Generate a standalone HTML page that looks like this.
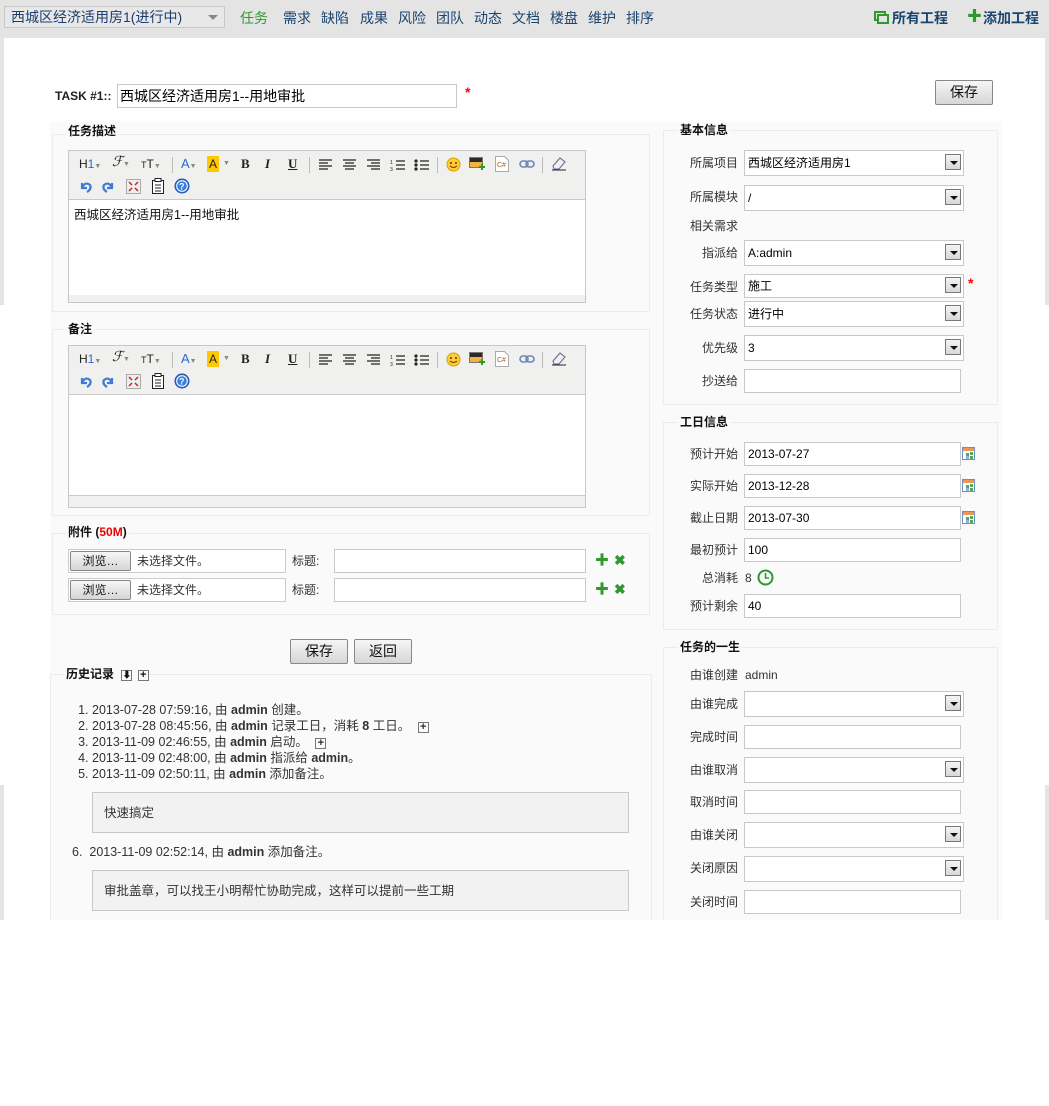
<!DOCTYPE html>
<html><head><meta charset="utf-8">
<style>
*{box-sizing:border-box;margin:0;padding:0}
body{width:1049px;height:1106px;background:#fff;font-family:"Liberation Sans","Noto Sans CJK SC",sans-serif;font-size:12px;line-height:15px;color:#333;position:relative;overflow:hidden}
.a{position:absolute}
.top{left:0;top:0;width:1049px;height:38px;background:#e4e4e4}
.nav{top:9px;font-size:14px;line-height:18px;color:#1b4470}
.fs{position:absolute;border:1px solid #ececec;background:#fafafa}
.lg{position:absolute;font-weight:bold;font-size:12px;color:#111;background:#fafafa;padding:0 2px;line-height:14px}
.inp{position:absolute;border:1px solid #c8c8c8;background:#fff;height:24px;font-size:12px;line-height:22px;padding-left:3px;color:#000}
.sel .arr{position:absolute;right:2px;top:3px;width:16px;height:16px;border:1px solid #777;background:linear-gradient(#f4f4f4,#d8d8d8)}
.sel .arr:after{content:"";position:absolute;left:4px;top:6px;border-left:4px solid transparent;border-right:4px solid transparent;border-top:4px solid #111}
.lab{position:absolute;width:70px;text-align:right;color:#333;font-size:12px}
.btn{position:absolute;height:25px;border:1px solid #888;border-radius:2px;background:linear-gradient(#f6f6f6,#d6d6d6);font-size:14px;text-align:center;line-height:23px;color:#111}
.ed{position:absolute;border:1px solid #c8c8c8;background:#fff}
.tb{position:absolute;left:0;top:0;right:0;height:49px;background:#f0f0ee;border-bottom:1px solid #c8c8c8}
.ti{position:absolute;font-size:12px;line-height:14px;color:#222}
.sep{position:absolute;top:6px;width:1px;height:16px;background:#bbb}
.bb{position:absolute;left:0;right:0;bottom:0;height:7px;background:#f0f0ee}
.hl li{margin-left:22px;line-height:16px;font-size:12.5px;color:#333}
.note{position:absolute;left:92px;width:537px;height:41px;border:1px solid #c8c8c8;background:#f2f2f2;padding:12px 0 0 11px;font-size:12.5px;line-height:16px}
.cal{position:absolute;width:13px;height:13px;border:1px solid #6a8fc7;background:#fff}
.cal:before{content:"";position:absolute;left:0;top:0;right:0;height:3px;background:#f0955a}
.cal:after{content:"";position:absolute;left:3px;top:5px;width:3px;height:3px;background:#5a5;box-shadow:4px -1px 0 #5a5,0 3px 0 #9ad,4px 3px 0 #5a5}
</style></head><body>
<div class="a top"></div>
<div class="a" style="left:4px;top:6px;width:221px;height:22px;border:1px solid #c8c8c8;background:#e8e8e8;font-size:14px;color:#1b3e6e;line-height:20px;padding-left:6px">西城区经济适用房1(进行中)<span class="a" style="right:6px;top:8px;border-left:5px solid transparent;border-right:5px solid transparent;border-top:5px solid #888"></span></div>
<span class="a nav" style="left:240px;color:#2e9a2e">任务</span>
<span class="a nav" style="left:283px">需求</span>
<span class="a nav" style="left:321px">缺陷</span>
<span class="a nav" style="left:360px">成果</span>
<span class="a nav" style="left:398px">风险</span>
<span class="a nav" style="left:436px">团队</span>
<span class="a nav" style="left:474px">动态</span>
<span class="a nav" style="left:512px">文档</span>
<span class="a nav" style="left:550px">楼盘</span>
<span class="a nav" style="left:588px">维护</span>
<span class="a nav" style="left:626px">排序</span>
<svg class="a" style="left:874px;top:11px" width="15" height="13"><rect x="1" y="1" width="10" height="8" fill="none" stroke="#2e9a2e" stroke-width="2"/><rect x="4" y="4" width="10" height="8" fill="#e4e4e4" stroke="#2e9a2e" stroke-width="2"/></svg>
<span class="a nav" style="left:892px;font-weight:bold">所有工程</span>
<span class="a nav" style="left:967px;color:#2e9a2e;font-weight:bold;font-size:15px;top:8px">✚</span>
<span class="a nav" style="left:983px;font-weight:bold">添加工程</span>

<div class="a" style="left:0;top:38px;width:4px;height:267px;background:#e4e4e4"></div>
<div class="a" style="left:1045px;top:38px;width:4px;height:267px;background:#e4e4e4"></div>
<div class="a" style="left:0;top:785px;width:4px;height:135px;background:#e4e4e4"></div>
<div class="a" style="left:1045px;top:785px;width:4px;height:135px;background:#e4e4e4"></div>

<span class="a" style="left:55px;top:89px;font-weight:bold;color:#222">TASK #1::</span>
<div class="inp" style="left:117px;top:84px;width:340px;height:24px;font-size:14px;line-height:22px;padding-left:2px">西城区经济适用房1--用地审批</div>
<span class="a" style="left:465px;top:85px;color:#f00;font-weight:bold;font-size:14px">*</span>
<div class="btn" style="left:935px;top:80px;width:58px">保存</div>

<div class="a" style="left:50px;top:122px;width:610px;height:798px;background:#fafafa"></div>
<div class="a" style="left:660px;top:122px;width:342px;height:798px;background:#fafafa"></div>

<div class="fs" style="left:52px;top:134px;width:598px;height:178px"></div>
<div class="lg" style="left:66px;top:124px">任务描述</div>
<div class="ed" style="left:68px;top:150px;width:518px;height:153px">
 <div class="tb" id="tb1"></div>
 <div class="a" style="left:5px;top:57px;font-size:12.5px;color:#111">西城区经济适用房1--用地审批</div>
 <div class="bb"></div>
</div>
<div class="fs" style="left:52px;top:329px;width:598px;height:187px"></div>
<div class="lg" style="left:66px;top:322px">备注</div>
<div class="ed" style="left:68px;top:345px;width:518px;height:163px">
 <div class="tb" id="tb2"></div>
 <div class="bb" style="height:12px;border-top:1px solid #c8c8c8"></div>
</div>
<div class="fs" style="left:52px;top:533px;width:598px;height:82px"></div>
<div class="lg" style="left:66px;top:525px">附件 (<span style="color:#e00">50M</span>)</div>
<div class="a" style="left:68px;top:549px;width:218px;height:24px;border:1px solid #ccc;background:#fff"></div>
<div class="btn" style="left:70px;top:551px;width:61px;height:20px;font-size:12px;line-height:18px">浏览…</div>
<span class="a" style="left:137px;top:554px">未选择文件。</span>
<span class="a" style="left:292px;top:554px">标题:</span>
<div class="inp" style="left:334px;top:549px;width:252px"></div>
<span class="a" style="left:595px;top:553px;color:#2e9a2e;font-weight:bold;font-size:14px">✚</span>
<span class="a" style="left:614px;top:553px;color:#2e9a2e;font-weight:bold;font-size:14px">✖</span>
<div class="a" style="left:68px;top:578px;width:218px;height:24px;border:1px solid #ccc;background:#fff"></div>
<div class="btn" style="left:70px;top:580px;width:61px;height:20px;font-size:12px;line-height:18px">浏览…</div>
<span class="a" style="left:137px;top:583px">未选择文件。</span>
<span class="a" style="left:292px;top:583px">标题:</span>
<div class="inp" style="left:334px;top:578px;width:252px"></div>
<span class="a" style="left:595px;top:582px;color:#2e9a2e;font-weight:bold;font-size:14px">✚</span>
<span class="a" style="left:614px;top:582px;color:#2e9a2e;font-weight:bold;font-size:14px">✖</span>

<div class="btn" style="left:290px;top:639px;width:58px">保存</div>
<div class="btn" style="left:354px;top:639px;width:58px">返回</div>

<div class="fs" style="left:50px;top:674px;width:602px;height:260px"></div>
<div class="lg" style="left:64px;top:667px">历史记录 <span style="display:inline-block;width:11px;height:11px;border:1px solid #777;font-size:9px;line-height:9px;text-align:center;margin-left:4px">⬇</span> <span style="display:inline-block;width:11px;height:11px;border:1px solid #777;font-size:11px;line-height:9px;text-align:center;margin-left:2px">+</span></div>
<ol class="a hl" style="left:70px;top:702px">
<li>2013-07-28 07:59:16, 由 <b>admin</b> 创建。</li>
<li>2013-07-28 08:45:56, 由 <b>admin</b> 记录工日，消耗 <b>8</b> 工日。 <span style="display:inline-block;width:11px;height:11px;border:1px solid #777;font-size:11px;line-height:9px;text-align:center;margin-left:4px;font-weight:bold">+</span></li>
<li>2013-11-09 02:46:55, 由 <b>admin</b> 启动。 <span style="display:inline-block;width:11px;height:11px;border:1px solid #777;font-size:11px;line-height:9px;text-align:center;margin-left:4px;font-weight:bold">+</span></li>
<li>2013-11-09 02:48:00, 由 <b>admin</b> 指派给 <b>admin</b>。</li>
<li>2013-11-09 02:50:11, 由 <b>admin</b> 添加备注。</li>
</ol>
<div class="note" style="top:792px">快速搞定</div>
<span class="a" style="left:72px;top:844px;font-size:12.5px;line-height:16px">6.&nbsp; 2013-11-09 02:52:14, 由 <b>admin</b> 添加备注。</span>
<div class="note" style="top:870px">审批盖章，可以找王小明帮忙协助完成，这样可以提前一些工期</div>

<div class="fs" style="left:663px;top:130px;width:335px;height:275px"></div>
<div class="lg" style="left:678px;top:123px">基本信息</div>
<div class="lab" style="left:668px;top:156px">所属项目</div><div class="inp sel" style="left:744px;top:150px;width:220px;height:26px;line-height:24px">西城区经济适用房1<span class="arr"></span></div>
<div class="lab" style="left:668px;top:190px">所属模块</div><div class="inp sel" style="left:744px;top:185px;width:220px;height:26px;line-height:24px">/<span class="arr"></span></div>
<div class="lab" style="left:668px;top:219px">相关需求</div>
<div class="lab" style="left:668px;top:246px">指派给</div><div class="inp sel" style="left:744px;top:240px;width:220px;height:26px;line-height:24px">A:admin<span class="arr"></span></div>
<div class="lab" style="left:668px;top:280px">任务类型</div><div class="inp sel" style="left:744px;top:274px;width:220px;height:24px">施工<span class="arr" style="top:2px"></span></div>
<span class="a" style="left:968px;top:276px;color:#f00;font-weight:bold;font-size:14px">*</span>
<div class="lab" style="left:668px;top:307px">任务状态</div><div class="inp sel" style="left:744px;top:301px;width:220px;height:26px;line-height:24px">进行中<span class="arr"></span></div>
<div class="lab" style="left:668px;top:341px">优先级</div><div class="inp sel" style="left:744px;top:335px;width:220px;height:26px;line-height:24px">3<span class="arr"></span></div>
<div class="lab" style="left:668px;top:374px">抄送给</div><div class="inp" style="left:744px;top:369px;width:217px"></div>

<div class="fs" style="left:663px;top:422px;width:335px;height:208px"></div>
<div class="lg" style="left:678px;top:415px">工日信息</div>
<div class="lab" style="left:668px;top:447px">预计开始</div><div class="inp" style="left:744px;top:442px;width:217px">2013-07-27</div><div class="cal" style="left:962px;top:447px"></div>
<div class="lab" style="left:668px;top:479px">实际开始</div><div class="inp" style="left:744px;top:474px;width:217px">2013-12-28</div><div class="cal" style="left:962px;top:479px"></div>
<div class="lab" style="left:668px;top:511px">截止日期</div><div class="inp" style="left:744px;top:506px;width:217px">2013-07-30</div><div class="cal" style="left:962px;top:511px"></div>
<div class="lab" style="left:668px;top:543px">最初预计</div><div class="inp" style="left:744px;top:538px;width:217px">100</div>
<div class="lab" style="left:668px;top:571px">总消耗</div><span class="a" style="left:745px;top:571px">8</span>
<svg class="a" style="left:757px;top:569px" width="17" height="17"><circle cx="8.5" cy="8.5" r="7" fill="none" stroke="#2e9a2e" stroke-width="2"/><path d="M8.5 4v5h3.5" fill="none" stroke="#2e9a2e" stroke-width="1.6"/></svg>
<div class="lab" style="left:668px;top:599px">预计剩余</div><div class="inp" style="left:744px;top:594px;width:217px">40</div>

<div class="fs" style="left:663px;top:647px;width:335px;height:290px"></div>
<div class="lg" style="left:678px;top:640px">任务的一生</div>
<div class="lab" style="left:668px;top:668px">由谁创建</div><span class="a" style="left:745px;top:668px">admin</span>
<div class="lab" style="left:668px;top:697px">由谁完成</div><div class="inp sel" style="left:744px;top:691px;width:220px;height:26px"><span class="arr"></span></div>
<div class="lab" style="left:668px;top:730px">完成时间</div><div class="inp" style="left:744px;top:725px;width:217px"></div>
<div class="lab" style="left:668px;top:763px">由谁取消</div><div class="inp sel" style="left:744px;top:757px;width:220px;height:26px"><span class="arr"></span></div>
<div class="lab" style="left:668px;top:795px">取消时间</div><div class="inp" style="left:744px;top:790px;width:217px"></div>
<div class="lab" style="left:668px;top:828px">由谁关闭</div><div class="inp sel" style="left:744px;top:822px;width:220px;height:26px"><span class="arr"></span></div>
<div class="lab" style="left:668px;top:861px">关闭原因</div><div class="inp sel" style="left:744px;top:856px;width:220px;height:26px"><span class="arr"></span></div>
<div class="lab" style="left:668px;top:895px">关闭时间</div><div class="inp" style="left:744px;top:890px;width:217px"></div>

<div class="a" style="left:0;top:920px;width:1049px;height:186px;background:#fff"></div>

<template id="tbt">
<span class="ti" style="left:10px;top:6px">H<span style="color:#2a6ad0">1</span><span style="font-size:7px;color:#888">▼</span></span>
<span class="ti" style="left:43px;top:5px;font-style:italic;font-family:'Liberation Serif',serif;font-size:14px">ℱ<span style="font-size:7px;color:#888">▼</span></span>
<span class="ti" style="left:72px;top:6px"><span style="font-size:9px">T</span>T<span style="font-size:7px;color:#888">▼</span></span>
<span class="sep" style="left:103px"></span>
<span class="ti" style="left:112px;top:6px;color:#2a6ad0;font-size:13px">A<span style="font-size:7px;color:#888">▼</span></span>
<span class="ti" style="left:138px;top:5px;background:#ffc800;padding:1px 2px;font-size:12px">A</span><span class="ti" style="left:154px;top:6px;font-size:7px;color:#888">▼</span>
<span class="ti" style="left:172px;top:6px;font-weight:bold;font-family:'Liberation Serif',serif;font-size:13px">B</span>
<span class="ti" style="left:196px;top:6px;font-weight:bold;font-style:italic;font-family:'Liberation Serif',serif;font-size:13px">I</span>
<span class="ti" style="left:219px;top:6px;font-weight:bold;text-decoration:underline;font-family:'Liberation Serif',serif;font-size:13px">U</span>
<span class="sep" style="left:240px"></span>
<svg class="a" style="left:250px;top:8px" width="110" height="12" stroke="#222" stroke-width="1.2"><path d="M0 1h13M0 4h9M0 7h13M0 10h9"/><path d="M24 1h13M26 4h9M24 7h13M26 10h9"/><path d="M48 1h13M52 4h9M48 7h13M52 10h9"/><path d="M77 2h9M77 6h9M77 10h9" /><text x="71" y="5" font-size="5" stroke="none" fill="#222">1</text><text x="71" y="12" font-size="5" stroke="none" fill="#222">3</text><path d="M101 2h9M101 6h9M101 10h9"/><circle cx="97" cy="2" r="1" fill="#222"/><circle cx="97" cy="6" r="1" fill="#222"/><circle cx="97" cy="10" r="1" fill="#222"/></svg>
<span class="sep" style="left:368px"></span>
<svg class="a" style="left:377px;top:6px" width="15" height="15"><circle cx="7.5" cy="7.5" r="6.5" fill="#fc3" stroke="#d9a000"/><circle cx="5" cy="6" r="1" fill="#630"/><circle cx="10" cy="6" r="1" fill="#630"/><path d="M4 9q3.5 3 7 0" fill="none" stroke="#630"/></svg>
<svg class="a" style="left:400px;top:5px" width="16" height="16"><rect x="0.5" y="1.5" width="13" height="10" fill="#f3b33d" stroke="#777"/><rect x="1" y="2" width="12" height="4" fill="#2a2a2a"/><path d="M10 11h6M13 8v6" stroke="#2e9a2e" stroke-width="2"/></svg>
<svg class="a" style="left:426px;top:5px" width="14" height="16"><path d="M0.5 0.5h9l4 4v11h-13z" fill="#fff" stroke="#aaa"/><text x="2" y="11" font-size="7" fill="#a06020">C#</text></svg>
<svg class="a" style="left:450px;top:8px" width="16" height="10"><rect x="1" y="2" width="8" height="6" rx="3" fill="none" stroke="#6b86b8" stroke-width="1.6"/><rect x="7" y="2" width="8" height="6" rx="3" fill="none" stroke="#6b86b8" stroke-width="1.6"/></svg>
<span class="sep" style="left:473px"></span>
<svg class="a" style="left:482px;top:6px" width="16" height="14"><path d="M2 9l7-8 5 4-6 7H3z" fill="#eef" stroke="#667"/><path d="M1 13h14" stroke="#223"/></svg>
<svg class="a" style="left:10px;top:29px" width="13" height="13"><path d="M3 3v5h5" fill="none" stroke="#3d7bd6" stroke-width="2.2"/><path d="M3 8Q6 1 11 5Q13 9 8 12" fill="none" stroke="#3d7bd6" stroke-width="2.2"/></svg>
<svg class="a" style="left:33px;top:29px" width="13" height="13"><path d="M10 3v5H5" fill="none" stroke="#3d7bd6" stroke-width="2.2"/><path d="M10 8Q7 1 2 5Q0 9 5 12" fill="none" stroke="#3d7bd6" stroke-width="2.2"/></svg>
<svg class="a" style="left:57px;top:28px" width="15" height="15"><rect x="0.5" y="0.5" width="14" height="14" fill="#eee" stroke="#aaa"/><path d="M3 3l3 3M12 3l-3 3M3 12l3-3M12 12l-3-3" stroke="#c22" stroke-width="1.5"/></svg>
<svg class="a" style="left:82px;top:27px" width="14" height="16"><rect x="1.5" y="2.5" width="11" height="13" fill="#fff" stroke="#222"/><rect x="4" y="0.5" width="6" height="3" fill="#fff" stroke="#222"/><path d="M4 7h6M4 10h6M4 13h6" stroke="#222"/></svg>
<svg class="a" style="left:105px;top:27px" width="16" height="16"><circle cx="8" cy="8" r="7" fill="#3a7de0" stroke="#1c4fa8"/><circle cx="8" cy="8" r="5.3" fill="none" stroke="#fff"/><text x="5" y="11.5" font-size="9" font-weight="bold" fill="#fff">?</text></svg>
</template>
<script>
var t=document.getElementById('tbt').innerHTML;
document.getElementById('tb1').innerHTML=t;
document.getElementById('tb2').innerHTML=t;
</script>
</body></html>
